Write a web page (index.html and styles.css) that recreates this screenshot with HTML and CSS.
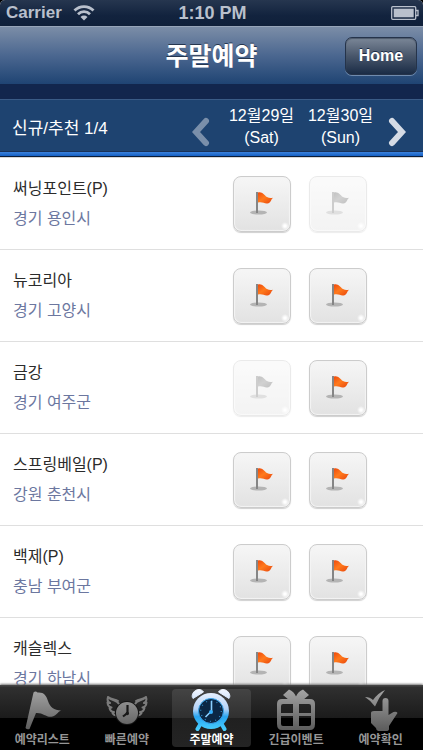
FILE: index.html
```html
<!DOCTYPE html>
<html lang="ko">

<head>
    <meta charset="UTF-8">
    <meta name="viewport" content="width=device-width, initial-scale=1.0">
    <title>주말예약</title>
    <link rel="stylesheet" href="styles.css">
</head>

<body>
    <!-- shared icons -->
    <svg class="defs" width="0" height="0" aria-hidden="true">
        <defs>
            <linearGradient id="orange" x1="0" y1="0" x2="1" y2="1">
                <stop offset="0" stop-color="#ef4a0c" />
                <stop offset="0.45" stop-color="#ff7a1c" />
                <stop offset="1" stop-color="#e8440c" />
            </linearGradient>
            <linearGradient id="metal" x1="0" y1="0" x2="0" y2="40" gradientUnits="userSpaceOnUse">
                <stop offset="0" stop-color="#a5a5a5" />
                <stop offset="1" stop-color="#5e5e5e" />
            </linearGradient>
            <linearGradient id="aqua" x1="0" y1="0" x2="0" y2="42" gradientUnits="userSpaceOnUse">
                <stop offset="0" stop-color="#f2f6ff" />
                <stop offset="0.48" stop-color="#b4d3f8" />
                <stop offset="0.66" stop-color="#27a5f2" />
                <stop offset="1" stop-color="#4cd2ff" />
            </linearGradient>
            <symbol id="flag" viewBox="0 0 24 24">
                <ellipse class="flag-shadow" cx="8.500" cy="21.500" rx="8.500" ry="2" />
                <rect class="flag-pole" x="6" y="1" width="2" height="21" />
                <path class="flag-cloth" d="M8 1.500C12 0 14 4 17 6c2 1.300 4 1.200 6 .8-2 1.500-2 4.600-4.500 5.400-4 1.200-5.500-1.800-10.500-.6z" />
            </symbol>
        </defs>
    </svg>

    <div class="screen">
        <div class="status">
            <div class="carrier">
                <span>Carrier</span>
                <svg width="22" height="16" viewBox="0 0 22 16" fill="none" stroke="#b9c0cc" stroke-width="2.800" aria-hidden="true">
                    <path d="M1.500 5.500a13.500 13.500 0 0 1 19 0M5 9.200a8.500 8.500 0 0 1 12 0" />
                    <path d="M11 15.500L7.500 12a5 5 0 0 1 7 0z" fill="#b9c0cc" stroke="none" />
                </svg>
            </div>
            <span class="clock">1:10 PM</span>
            <svg class="battery" width="28" height="14" viewBox="0 0 28 14" aria-hidden="true">
                <rect x="0.700" y="0.700" width="24" height="12.600" rx="1" fill="none" stroke="#b9c0cc" stroke-width="1.300" />
                <rect x="2.700" y="2.700" width="20" height="8.600" fill="#b9c0cc" />
                <path d="M25 4.500h2v5h-2" fill="none" stroke="#b9c0cc" stroke-width="1.300" />
            </svg>
        </div>

        <header class="navbar">
            <h1>주말예약</h1>
            <button type="button" class="home">Home</button>
        </header>

        <div class="datebar">
            <span class="group">신규/추천 1/4</span>
            <button type="button" class="arrow prev" aria-label="이전">
                <svg width="18" height="30" viewBox="0 0 18 30"><path d="M14 4L4 15l10 11" /></svg>
            </button>
            <span class="date">12월29일<br>(Sat)</span>
            <span class="date">12월30일<br>(Sun)</span>
            <button type="button" class="arrow next" aria-label="다음">
                <svg width="18" height="30" viewBox="0 0 18 30"><path d="M4 4L14 15 4 26" /></svg>
            </button>
        </div>

        <ul class="list" id="list">
            <li class="row">
                <div class="club">
                    <p class="name">써닝포인트(P)</p>
                    <p class="area">경기 용인시</p>
                </div>
                <button type="button" class="book" aria-label="토요일 예약"><svg class="flag"><use href="#flag" /></svg></button>
                <button type="button" class="book" aria-label="일요일 예약" disabled><svg class="flag"><use href="#flag" /></svg></button>
            </li>
            <li class="row">
                <div class="club">
                    <p class="name">뉴코리아</p>
                    <p class="area">경기 고양시</p>
                </div>
                <button type="button" class="book" aria-label="토요일 예약"><svg class="flag"><use href="#flag" /></svg></button>
                <button type="button" class="book" aria-label="일요일 예약"><svg class="flag"><use href="#flag" /></svg></button>
            </li>
            <li class="row">
                <div class="club">
                    <p class="name">금강</p>
                    <p class="area">경기 여주군</p>
                </div>
                <button type="button" class="book" aria-label="토요일 예약" disabled><svg class="flag"><use href="#flag" /></svg></button>
                <button type="button" class="book" aria-label="일요일 예약"><svg class="flag"><use href="#flag" /></svg></button>
            </li>
            <li class="row">
                <div class="club">
                    <p class="name">스프링베일(P)</p>
                    <p class="area">강원 춘천시</p>
                </div>
                <button type="button" class="book" aria-label="토요일 예약"><svg class="flag"><use href="#flag" /></svg></button>
                <button type="button" class="book" aria-label="일요일 예약"><svg class="flag"><use href="#flag" /></svg></button>
            </li>
            <li class="row">
                <div class="club">
                    <p class="name">백제(P)</p>
                    <p class="area">충남 부여군</p>
                </div>
                <button type="button" class="book" aria-label="토요일 예약"><svg class="flag"><use href="#flag" /></svg></button>
                <button type="button" class="book" aria-label="일요일 예약"><svg class="flag"><use href="#flag" /></svg></button>
            </li>
            <li class="row">
                <div class="club">
                    <p class="name">캐슬렉스</p>
                    <p class="area">경기 하남시</p>
                </div>
                <button type="button" class="book" aria-label="토요일 예약"><svg class="flag"><use href="#flag" /></svg></button>
                <button type="button" class="book" aria-label="일요일 예약"><svg class="flag"><use href="#flag" /></svg></button>
            </li>
        </ul>

        <nav class="tabbar">
            <a href="#list" class="tab">
                <svg width="42" height="42" viewBox="0 0 42 42" fill="url(#metal)">
                    <path d="M12.500 3.500q2-2 4 0C23 3 25 6 27 12c2 6 6 9.500 13 9.500-4 2-4 4.500-8.500 6-6 1.500-9-4-16.500-3.500L8.500 40q-2.500 1-4-1z" />
                </svg>
                <span>예약리스트</span>
            </a>
            <a href="#quick" class="tab">
                <svg width="42" height="42" viewBox="0 0 42 42">
                    <g fill="none" stroke="#7b7b7b" stroke-width="2" stroke-linejoin="round" stroke-linecap="round">
                        <path id="wing" d="M13 15C11 11 6 12 2 8c-1 3 0 5 2 6-1 0-2 0-2.500-.5.2 3 1.500 4.500 4 5-.8.300-1.500.3-2 .2C4 21.500 5.500 23 8 23c-.5.6-1 .8-1.500 1 1 2 2.500 2.500 4.500 2.500M2 8c4 3 7 2 10 4" />
                        <use href="#wing" transform="matrix(-1 0 0 1 42 0)" />
                    </g>
                    <circle cx="21" cy="24" r="12" fill="#151515" />
                    <circle cx="21" cy="24" r="11" fill="url(#metal)" />
                    <path d="M21.500 16v8l-4.500 3.500" fill="none" stroke="#181818" stroke-width="2.200" />
                    <circle cx="21.300" cy="24.500" r="1.700" fill="#181818" />
                </svg>
                <span>빠른예약</span>
            </a>
            <a href="#weekend" class="tab active">
                <svg width="42" height="42" viewBox="0 0 42 42">
                    <g fill="url(#aqua)" stroke="url(#aqua)">
                        <path d="M3 9.500C1 7 3 3 5.500 1.500 8.500-.3 12 .5 13.500 3zM39 9.500C41 7 39 3 36.500 1.500 33.500-.3 30 .5 28.500 3z" />
                        <path d="M11 34l-3.500 6M31 34l3.500 6" stroke-width="4" stroke-linecap="round" />
                        <circle cx="21" cy="22" r="18" stroke="none" />
                    </g>
                    <circle cx="21" cy="22" r="12.500" fill="#0b2745" stroke="#39a7ef" stroke-width="1" />
                    <circle cx="21" cy="22" r="10.300" fill="none" stroke="#338bc8" stroke-width="1.200" stroke-dasharray="1 4.400" />
                    <path d="M21.500 12v10l-6 6" fill="none" stroke="#8bcfff" stroke-width="1.600" />
                    <circle cx="21" cy="23" r="2" fill="#35aefa" />
                </svg>
                <span>주말예약</span>
            </a>
            <a href="#event" class="tab">
                <svg width="42" height="42" viewBox="0 0 42 42">
                    <path d="M14 11L8 6l6-5.500q5 2 7 7 2-5 7-7L34 6l-6 5z" fill="url(#metal)" />
                    <path fill="url(#metal)" fill-rule="evenodd" d="M7 10h28q5 0 5 5v20q0 6-5 6H7q-5 0-5-6V15q0-5 5-5zM8 15q-2 0-2 2v7h12v-9zM24 15v9h12v-7q0-2-2-2zM6 27v8q0 2 2 2h10V27zM24 27v10h10q2 0 2-2v-8z" />
                </svg>
                <span>긴급이벤트</span>
            </a>
            <a href="#check" class="tab">
                <svg width="42" height="42" viewBox="0 0 42 42" fill="url(#metal)">
                    <path d="M5 8q5 0 8 3 5-7 12-10-6 7-10 16.500Q10 11 5 8z" />
                    <path d="M22.500 12q0-3 3-3t3 3v14l5-3q3-1 4 1L29 37v3q0 2-3 2h-8q-2-1-2-3l-5-5V24q0-2 3-2h8.500z" />
                </svg>
                <span>예약확인</span>
            </a>
        </nav>
    </div>
</body>

</html>
```

FILE: styles.css
```css
* {
    margin: 0;
    padding: 0;
    box-sizing: border-box;
}

body {
    background: #000;
    font-family: "Liberation Sans", "Noto Sans CJK KR", sans-serif;
    font-size: 16px;
}

button {
    font-family: inherit;
    cursor: pointer;
}

.defs {
    position: absolute;
}

.screen {
    display: flex;
    flex-direction: column;
    height: 100vh;
    overflow: hidden;
    background: #fff;
}

/* status bar */
.status {
    display: grid;
    grid-template-columns: 1fr auto 1fr;
    align-items: center;
    flex: none;
    height: 26px;
    padding: 0 4px 0 6px;
    background: linear-gradient(#26364f, #12233e 60%, #10203a);
    border-radius: 5px 5px 0 0;
    box-shadow: 0 -6px 0 6px #000;
    color: #b9c0cc;
    font-size: 18px;
    font-weight: bold;
}

.carrier {
    display: flex;
    align-items: center;
    gap: 11px;
    font-size: 17px;
}

.battery {
    justify-self: end;
}

/* title bar */
.navbar {
    display: grid;
    grid-template-columns: 1fr auto 1fr;
    align-items: center;
    flex: none;
    height: 58px;
    padding: 0 6px;
    background: linear-gradient(#7b8da7, #4b6790 50%, #1f4473);
    border-top: 1px solid #97a5b9;
    z-index: 1;
}

.navbar h1 {
    grid-column: 2;
    color: #fff;
    font-size: 25px;
    line-height: 36px;
    text-shadow: 0 -1px 0 #26364f;
}

.home {
    justify-self: end;
    width: 72px;
    height: 38px;
    border: 1px solid #25334a;
    border-radius: 7px;
    background: linear-gradient(#7b8798, #48566b 50%, #1b2c46);
    box-shadow: 0 1px 0 #708bae, inset 0 1px 1px #4d596b;
    color: #fff;
    font-size: 16px;
    font-weight: bold;
    text-shadow: 0 -1px 0 #1b2c46;
}

/* date selector */
.datebar {
    display: grid;
    grid-template-columns: 1fr 24px 67px 67px 20px;
    column-gap: 12px;
    align-items: center;
    flex: none;
    height: 74px;
    padding: 16px 17px 5px 12px;
    background: linear-gradient(#12264d 15px, #3a5b86 15px, #3a5b86 16px, #1e4370 16px, #1e4370 67px, #1a3158 67px, #1a3158 68px, #3b82dc 68px, #1560c4 72px, #0b1c38 72px, #0b1c38 73px, #d8d8d8 73px);
    color: #fff;
}

.group {
    font-size: 17px;
}

.date {
    line-height: 22px;
    text-align: center;
    white-space: nowrap;
}

.arrow {
    height: 30px;
    margin-top: 10px;
    border: none;
    background: none;
}

.arrow svg {
    display: block;
    fill: none;
    stroke: #d5dbe5;
    stroke-width: 6;
    stroke-linecap: round;
}

.prev {
    opacity: 0.5;
}

.next svg {
    margin-left: auto;
}

/* golf club list */
.list {
    flex: 1;
    min-height: 0;
    overflow: hidden;
    list-style: none;
}

.row {
    display: flex;
    align-items: center;
    gap: 18px;
    height: 92px;
    padding: 0 56px 0 13px;
    border-bottom: 1px solid #dfdfdf;
}

.club {
    flex: 1;
    line-height: 30px;
}

.name {
    color: #2b2b2b;
}

.area {
    color: #6c779f;
}

.book {
    width: 58px;
    height: 56px;
    border: 1px solid #ccc;
    border-radius: 8px;
    background: radial-gradient(circle at 51px 49px, #fff 1px, transparent 4px), linear-gradient(#f6f6f6, #e2e2e2);
    box-shadow: inset 0 0 1px 1px #f4f4f4, 0 1px 1px #d0d0d0;
}

.flag {
    display: block;
    width: 24px;
    height: 24px;
    margin: 0 auto 2px;
}

.flag-shadow {
    fill: #b4b4b4;
}

.flag-pole {
    fill: #858585;
}

.flag-cloth {
    fill: url(#orange);
}

.book:disabled {
    opacity: 0.4;
    filter: grayscale(1);
}

/* bottom tabs */
.tabbar {
    display: flex;
    flex: none;
    height: 65px;
    padding: 4px 0 3px;
    background: linear-gradient(#454545 1px, #303030 2px, #1b1b1b 33px, #000 33px);
    box-shadow: 0 -1px 2px #777;
    z-index: 1;
}

.tab {
    display: flex;
    flex: 1;
    flex-direction: column;
    align-items: center;
    margin: 0 3px;
    border-radius: 4px;
    color: #969696;
    font-size: 12px;
    font-weight: bold;
    line-height: 18px;
    text-decoration: none;
    white-space: nowrap;
}

.tab svg {
    display: block;
    flex: none;
}

.tab.active {
    background: linear-gradient(#444, #303030 29px, #202020 29px, #242424);
    color: #fff;
}
```
